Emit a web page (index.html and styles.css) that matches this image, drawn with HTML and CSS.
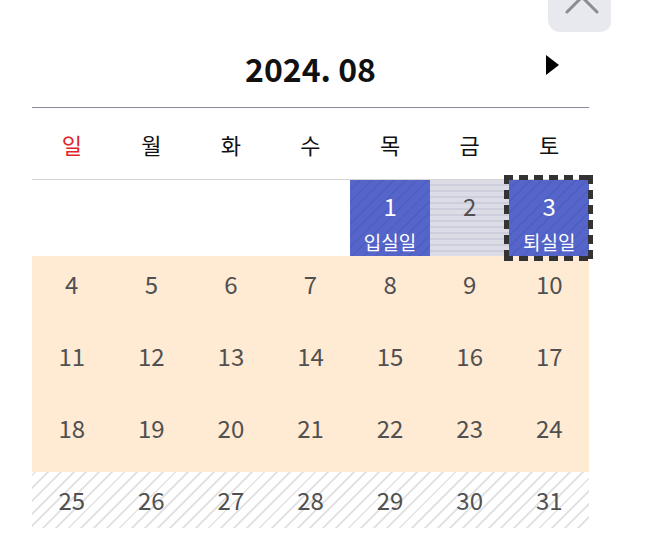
FILE: index.html
```html
<!DOCTYPE html>
<html>
<head>
  <title>달력</title>
  <link rel="stylesheet" href="styles.css">
</head>
<body>
  <div class="picker">
    <button class="close-button" aria-label="닫기">
      <svg width="63" height="32" viewBox="0 0 63 32">
        <path d="M19 12 L34 -3 L49 12" fill="none" stroke="#8c8c94" stroke-width="3" stroke-linecap="round"/>
      </svg>
    </button>

    <div class="header">
      <h1 class="month-title">2024. 08</h1>
      <span class="next-month"></span>
    </div>

    <div class="weekdays">
      <div class="weekday sunday">일</div>
      <div class="weekday">월</div>
      <div class="weekday">화</div>
      <div class="weekday">수</div>
      <div class="weekday">목</div>
      <div class="weekday">금</div>
      <div class="weekday">토</div>
    </div>

    <div class="week first-week">
      <div class="day empty"></div>
      <div class="day empty"></div>
      <div class="day empty"></div>
      <div class="day empty"></div>
      <div class="day selected"><span class="num">1</span><span class="tag">입실일</span></div>
      <div class="day blocked"><span class="num">2</span></div>
      <div class="day selected checkout"><span class="num">3</span><span class="tag">퇴실일</span></div>
    </div>

    <div class="week in-range">
      <div class="day"><span class="num">4</span></div>
      <div class="day"><span class="num">5</span></div>
      <div class="day"><span class="num">6</span></div>
      <div class="day"><span class="num">7</span></div>
      <div class="day"><span class="num">8</span></div>
      <div class="day"><span class="num">9</span></div>
      <div class="day"><span class="num">10</span></div>
    </div>

    <div class="week in-range">
      <div class="day"><span class="num">11</span></div>
      <div class="day"><span class="num">12</span></div>
      <div class="day"><span class="num">13</span></div>
      <div class="day"><span class="num">14</span></div>
      <div class="day"><span class="num">15</span></div>
      <div class="day"><span class="num">16</span></div>
      <div class="day"><span class="num">17</span></div>
    </div>

    <div class="week in-range">
      <div class="day"><span class="num">18</span></div>
      <div class="day"><span class="num">19</span></div>
      <div class="day"><span class="num">20</span></div>
      <div class="day"><span class="num">21</span></div>
      <div class="day"><span class="num">22</span></div>
      <div class="day"><span class="num">23</span></div>
      <div class="day"><span class="num">24</span></div>
    </div>

    <div class="week disabled-week">
      <div class="day"><span class="num">25</span></div>
      <div class="day"><span class="num">26</span></div>
      <div class="day"><span class="num">27</span></div>
      <div class="day"><span class="num">28</span></div>
      <div class="day"><span class="num">29</span></div>
      <div class="day"><span class="num">30</span></div>
      <div class="day"><span class="num">31</span></div>
    </div>
  </div>
</body>
</html>
```

FILE: styles.css
```css
body {
  margin: 0;
  background: #fff;
  font-family: "Noto Sans CJK KR", "Noto Sans", sans-serif;
  color: #555;
}
.picker {
  position: relative;
  width: 557px;
  margin-left: 32px;
}
.close-button {
  position: absolute;
  top: 0;
  left: 516px;
  width: 63px;
  height: 32px;
  padding: 0;
  border: none;
  border-radius: 0 0 10px 12px;
  background: #e7e9ef;
}
.close-button svg {
  display: block;
}
.header {
  position: relative;
  height: 108px;
  padding-top: 28px;
  box-sizing: border-box;
  display: flex;
  align-items: center;
  justify-content: center;
  border-bottom: 1px solid #8a8a96;
}
.month-title {
  margin: 0;
  font-size: 32px;
  font-weight: bold;
  color: #111;
}
.next-month {
  position: absolute;
  right: 30px;
  top: 55px;
  width: 0;
  height: 0;
  border-top: 10.5px solid transparent;
  border-bottom: 10.5px solid transparent;
  border-left: 13px solid #000;
}
.weekdays {
  display: grid;
  grid-template-columns: repeat(7, 1fr);
  height: 71px;
  border-bottom: 1px solid #d6d6d6;
}
.weekday {
  display: flex;
  align-items: center;
  justify-content: center;
  font-size: 22px;
  color: #111;
}
.weekday.sunday {
  color: #e0262b;
}
.week {
  display: grid;
  grid-template-columns: repeat(7, 1fr);
  height: 72px;
}
.day {
  position: relative;
  display: flex;
  flex-direction: column;
  align-items: center;
  padding-top: 10px;
  font-size: 24px;
  color: #505050;
}
.num {
  line-height: 36px;
}
.first-week {
  height: 76px;
}
.first-week .day {
  padding-top: 8px;
}
.tag {
  margin-top: 6px;
  font-size: 19px;
  line-height: 24px;
}
.selected {
  color: #fff;
  background: repeating-linear-gradient(-45deg, #5565c9 0 6px, #4f5fc2 6px 8px);
}
.blocked {
  background: repeating-linear-gradient(180deg, #dcdce6 0 4px, #cdcedb 4px 6px);
}
.checkout::after {
  content: "";
  position: absolute;
  top: -5px;
  bottom: -5px;
  left: -5px;
  right: -4px;
  background:
    repeating-linear-gradient(90deg, #333 0 9px, transparent 9px 15px) top / 100% 5px no-repeat,
    repeating-linear-gradient(90deg, #333 0 9px, transparent 9px 15px) bottom / 100% 5px no-repeat,
    repeating-linear-gradient(180deg, #333 0 9px, transparent 9px 15px) left / 5px 100% no-repeat,
    repeating-linear-gradient(180deg, #333 0 9px, transparent 9px 15px) right / 5px 100% no-repeat;
}
.in-range {
  background: #ffead4;
}
.disabled-week {
  height: 56px;
  background: repeating-linear-gradient(-45deg, #fff 0 7px, #e4e4e4 7px 9px);
}
```
